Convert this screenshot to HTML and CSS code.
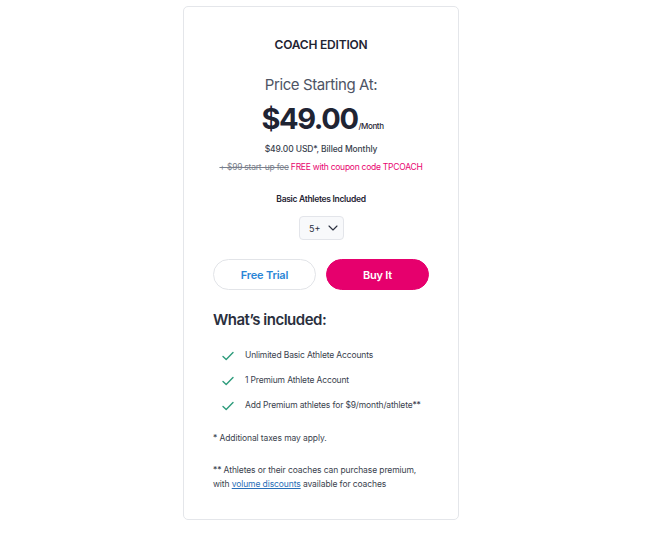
FILE: index.html
```html
<!DOCTYPE html>
<html lang="en">
<head>
<meta charset="utf-8">
<title>Coach Edition</title>
<link rel="stylesheet" href="styles.css">
</head>
<body>
<div class="card">
  <h2 class="edition">COACH EDITION</h2>
  <p class="starting">Price Starting At:</p>
  <p class="price"><span class="amount">$49.00</span><span class="per">/Month</span></p>
  <p class="billed">$49.00 USD*, Billed Monthly</p>
  <p class="coupon"><span class="strike">+ $99 start-up fee</span> <span class="free">FREE with coupon code TPCOACH</span></p>
  <p class="athletes-label">Basic Athletes Included</p>
  <div class="select-wrap">
    <div class="select"><span>5+</span>
      <svg class="chev" width="10" height="6" viewBox="0 0 10 6"><path d="M1 1l4 4 4-4" fill="none" stroke="#2b3040" stroke-width="1.1" stroke-linecap="round" stroke-linejoin="round"/></svg>
    </div>
  </div>
  <div class="buttons">
    <button class="btn trial">Free Trial</button>
    <button class="btn buy">Buy It</button>
  </div>
  <h3 class="included">What’s included:</h3>
  <ul class="features">
    <li><svg class="check" width="12" height="10" viewBox="0 0 12 10"><path d="M1 5.5l3.2 3L11 1.5" fill="none" stroke="#2e9c7c" stroke-width="1.4" stroke-linecap="round" stroke-linejoin="round"/></svg><span>Unlimited Basic Athlete Accounts</span></li>
    <li><svg class="check" width="12" height="10" viewBox="0 0 12 10"><path d="M1 5.5l3.2 3L11 1.5" fill="none" stroke="#2e9c7c" stroke-width="1.4" stroke-linecap="round" stroke-linejoin="round"/></svg><span>1 Premium Athlete Account</span></li>
    <li><svg class="check" width="12" height="10" viewBox="0 0 12 10"><path d="M1 5.5l3.2 3L11 1.5" fill="none" stroke="#2e9c7c" stroke-width="1.4" stroke-linecap="round" stroke-linejoin="round"/></svg><span>Add Premium athletes for $9/month/athlete**</span></li>
  </ul>
  <p class="note">* Additional taxes may apply.</p>
  <p class="note note2">** Athletes or their coaches can purchase premium, with <a href="#">volume discounts</a> available for coaches</p>
</div>
</body>
</html>
```
FILE: styles.css
```css
* { box-sizing: border-box; }
body {
  margin: 0;
  background: #fff;
  font-family: Inter, "Noto Sans", sans-serif;
  color: #1f2433;
}
.card {
  width: 276px;
  margin: 6px 0 0 183px;
  border: 1px solid #e4e6ea;
  border-radius: 5px;
  padding: 30px 29px 28px;
}
p, h2, h3, ul { margin: 0; padding: 0; }
.edition {
  font-size: 12px;
  line-height: 16px;
  font-weight: 600;
  text-align: center;
  letter-spacing: -0.2px;
}
.starting {
  margin-top: 22px;
  font-size: 15px;
  line-height: 20px;
  color: #4e5464;
  text-align: center;
  letter-spacing: -0.4px;
}
.price {
  margin-top: 6px;
  height: 36px;
  display: flex;
  justify-content: center;
  align-items: baseline;
  padding-left: 3px;
}
.amount {
  font-size: 29px;
  line-height: 36px;
  font-weight: 700;
  letter-spacing: -1.4px;
}
.per {
  font-size: 8px;
  line-height: 36px;
  font-weight: 500;
  letter-spacing: -0.4px;
  margin-left: 1px;
}
.billed {
  margin-top: 5px;
  font-size: 8.5px;
  line-height: 14px;
  font-weight: 500;
  color: #3a3f4e;
  text-align: center;
  letter-spacing: -0.1px;
}
.coupon {
  margin-top: 4px;
  font-size: 8.5px;
  line-height: 14px;
  text-align: center;
  letter-spacing: -0.25px;
  white-space: nowrap;
}
.strike { color: #7a7f8c; text-decoration: line-through; }
.free { color: #e8046f; }
.athletes-label {
  margin-top: 18px;
  font-size: 8.5px;
  line-height: 14px;
  font-weight: 600;
  text-align: center;
  letter-spacing: -0.3px;
}
.select-wrap {
  margin-top: 10px;
  display: flex;
  justify-content: center;
}
.select {
  width: 45px;
  height: 24px;
  margin-left: 1px;
  border: 1px solid #e3e5ea;
  border-radius: 4px;
  background: #f8f9fb;
  display: flex;
  align-items: center;
  justify-content: space-between;
  padding: 0 5px 0 9px;
  font-size: 9px;
  color: #2b3040;
}
.buttons {
  margin-top: 19px;
  display: flex;
  gap: 10px;
}
.btn {
  flex: 1;
  height: 31px;
  border-radius: 16px;
  font-family: inherit;
  font-size: 11px;
  font-weight: 600;
  letter-spacing: -0.2px;
  cursor: pointer;
}
.trial {
  background: #fff;
  border: 1px solid #e2e4e8;
  color: #2a86d6;
}
.buy {
  background: #e6006d;
  border: 1px solid #e6006d;
  color: #fff;
}
.included {
  margin-top: 19px;
  font-size: 15px;
  line-height: 22px;
  font-weight: 600;
  color: #2a2f3d;
  letter-spacing: -0.5px;
}
.features {
  list-style: none;
  margin-top: 17px;
  display: flex;
  flex-direction: column;
  gap: 11px;
}
.features li {
  display: flex;
  align-items: center;
  font-size: 8.5px;
  line-height: 14px;
  color: #3a3f4e;
  padding-left: 9px;
  letter-spacing: -0.15px;
}
.check { margin-right: 11px; margin-top: 2px; flex: none; }
.note {
  margin-top: 19px;
  font-size: 8.5px;
  line-height: 14px;
  color: #3a3f4e;
  letter-spacing: -0.1px;
}
.note2 { margin-top: 18px; }
.note2 a { color: #2a6fb8; text-decoration: underline; }
```
